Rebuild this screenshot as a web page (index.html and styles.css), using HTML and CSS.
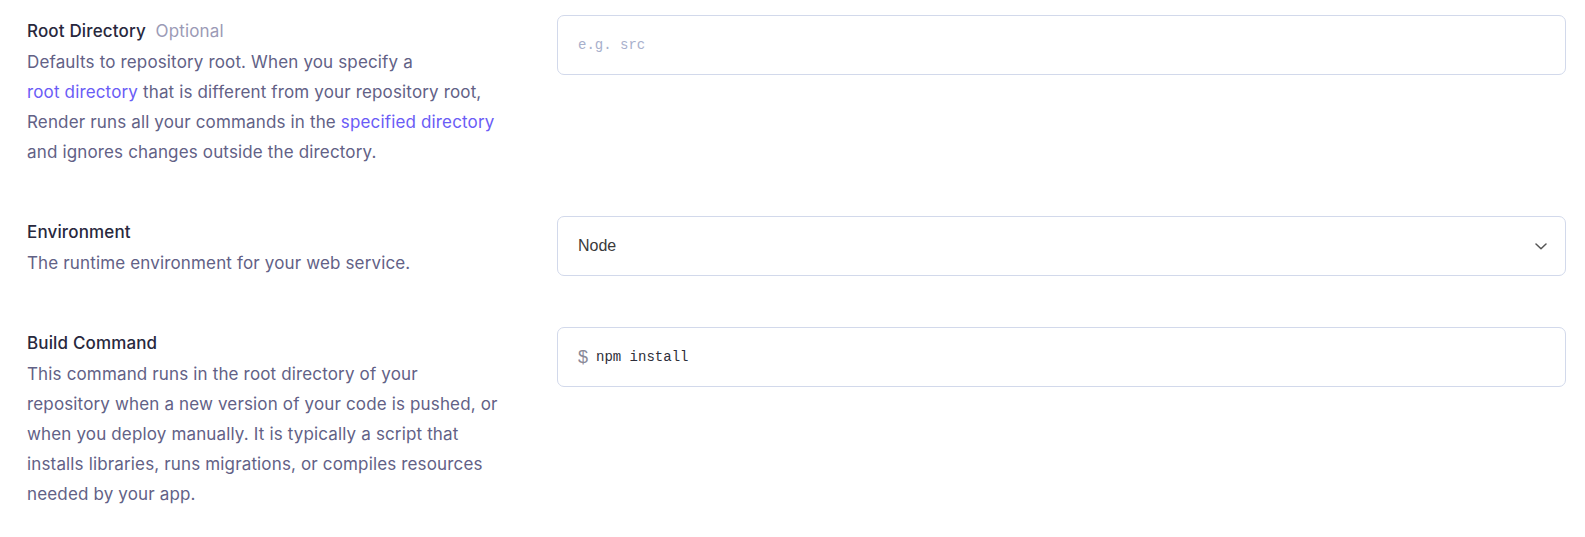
FILE: index.html
```html
<!DOCTYPE html>
<html lang="en">
<head>
<meta charset="utf-8">
<title>Service settings</title>
<link rel="stylesheet" href="styles.css">
</head>
<body>
<div class="form">
  <div class="row">
    <div class="info">
      <div class="label">Root Directory <span class="optional">Optional</span></div>
      <p class="desc">Defaults to repository root. When you specify a <a class="link" href="#">root directory</a> that is different from your repository root, Render runs all your commands in the <a class="link" href="#">specified directory</a> and ignores changes outside the directory.</p>
    </div>
    <div class="field">
      <div class="input mono"><span class="placeholder">e.g. src</span></div>
    </div>
  </div>

  <div class="row">
    <div class="info">
      <div class="label">Environment</div>
      <p class="desc">The runtime environment for your web service.</p>
    </div>
    <div class="field">
      <div class="input select">
        <span class="select-value">Node</span>
        <svg class="chevron" width="12" height="7" viewBox="0 0 12 7" aria-hidden="true"><path d="M1 1 L6 5.8 L11 1" fill="none" stroke="#555" stroke-width="1.5" stroke-linecap="round" stroke-linejoin="round"/></svg>
      </div>
    </div>
  </div>

  <div class="row">
    <div class="info">
      <div class="label">Build Command</div>
      <p class="desc">This command runs in the root directory of your<br>repository when a new version of your code is pushed, or<br>when you deploy manually. It is typically a script that<br>installs libraries, runs migrations, or compiles resources<br>needed by your app.</p>
    </div>
    <div class="field">
      <div class="input mono"><span class="prompt">$</span><span class="value">npm install</span></div>
    </div>
  </div>
</div>
</body>
</html>
```

FILE: styles.css
```css
* { box-sizing: border-box; }

html, body {
  margin: 0;
  padding: 0;
  background: #ffffff;
}

body {
  font-family: "Inter", "Noto Sans", sans-serif;
  font-size: 17px;
  letter-spacing: 0.15px;
  color: #28283d;
}

.form {
  display: flex;
  flex-direction: column;
  gap: 49px;
  padding: 15px 19px 0 27px;
}

.row {
  display: grid;
  grid-template-columns: 472px 1fr;
  column-gap: 58px;
  align-items: start;
}

.info {
  padding-top: 1px;
}

.label {
  font-weight: 500;
  line-height: 30px;
  color: #28283d;
  margin-bottom: 1px;
}

.optional {
  font-weight: 400;
  color: #9b9ab6;
  margin-left: 5px;
}

.desc {
  margin: 0;
  line-height: 30px;
  color: #626186;
}

.link {
  color: #6a5cf6;
  text-decoration: none;
  white-space: nowrap;
}

.input {
  height: 60px;
  border: 1px solid #d2d9eb;
  border-radius: 7px;
  background: #fff;
  display: flex;
  align-items: center;
  padding: 0 19px 0 20px;
  letter-spacing: 0;
}

.mono {
  font-family: "Liberation Mono", "DejaVu Sans Mono", monospace;
  font-size: 14px;
}

.placeholder {
  color: #a8b0cc;
}

.prompt {
  font-family: "Liberation Sans", Arial, sans-serif;
  font-size: 18px;
  color: #8a8a98;
  margin-right: 8px;
}

.value {
  color: #2e2e3a;
}

.select {
  justify-content: space-between;
  padding-right: 18px;
}

.select-value {
  font-family: "Liberation Sans", Arial, sans-serif;
  font-size: 16px;
  color: #3a3a3a;
}

.chevron {
  display: block;
}
```
